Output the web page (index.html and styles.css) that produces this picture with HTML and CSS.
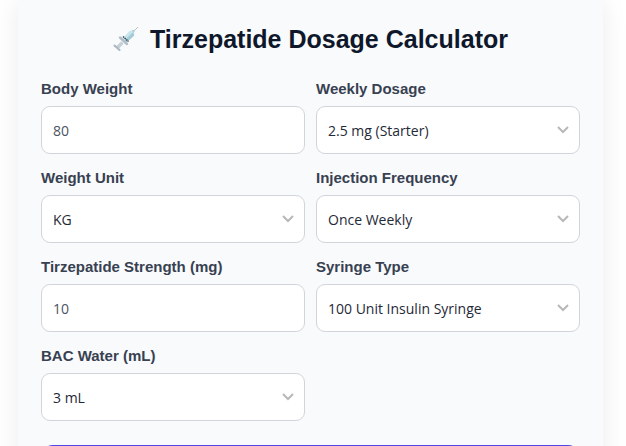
FILE: index.html
```html
<!DOCTYPE html>
<html lang="en">
<head>
  <meta charset="UTF-8">
  <meta name="viewport" content="width=device-width, initial-scale=1">
  <title>Tirzepatide Dosage Calculator</title>
  <link rel="stylesheet" href="styles.css">
</head>
<body>
  <form class="calculator">
    <h1>
      <svg class="syringe" viewBox="0 0 26 26" aria-hidden="true">
        <path d="M19 7L25 1" stroke="#b9c2ca" stroke-width="1"/>
        <path d="M17 6l3-2.500 2 2-2.500 3z" fill="#b5d5df"/>
        <path d="M9 13l7-7.500c1-1 2-.8 3 0l1.500 1.500c1 1 1 2 0 3L13 17z" fill="#c9e6ee"/>
        <path d="M11 15l8.500-8.500 1 1c1 1 1 1.700 0 2.700L13 17z" fill="#a5cbd7"/>
        <path d="M10 10.500l5.500 5" stroke="#35444f" stroke-width="1.500" stroke-dasharray="1.500 .7"/>
        <path d="M7 11.500l7 6.500" stroke="#b3bec9" stroke-width="2.500" stroke-linecap="round"/>
        <path d="M9.500 16.500L4 22" stroke="#c7d0d8" stroke-width="3.500"/>
        <path d="M1.500 19.500l5 4.500" stroke="#aab7c4" stroke-width="2" stroke-linecap="round"/>
      </svg>
      Tirzepatide Dosage Calculator
    </h1>

    <div class="fields">
      <div class="field">
        <label for="weight">Body Weight</label>
        <input type="text" inputmode="decimal" id="weight" value="80">
      </div>
      <div class="field">
        <label for="dosage">Weekly Dosage</label>
        <select id="dosage">
          <option>2.5 mg (Starter)</option>
        </select>
      </div>
      <div class="field">
        <label for="unit">Weight Unit</label>
        <select id="unit">
          <option>KG</option>
        </select>
      </div>
      <div class="field">
        <label for="frequency">Injection Frequency</label>
        <select id="frequency">
          <option>Once Weekly</option>
        </select>
      </div>
      <div class="field">
        <label for="strength">Tirzepatide Strength (mg)</label>
        <input type="text" inputmode="decimal" id="strength" value="10">
      </div>
      <div class="field">
        <label for="syringe">Syringe Type</label>
        <select id="syringe">
          <option>100 Unit Insulin Syringe</option>
        </select>
      </div>
      <div class="field">
        <label for="water">BAC Water (mL)</label>
        <select id="water">
          <option>3 mL</option>
        </select>
      </div>
    </div>

    <button type="button" aria-label="Calculate"></button>
  </form>
</body>
</html>
```
FILE: styles.css
```css
* {
  box-sizing: border-box;
}
body {
  margin: 0;
  height: 100vh;
  overflow: hidden;
  background: #fff;
  font-family: "Liberation Sans", Arial, sans-serif;
}
.calculator {
  margin: 0 23px 0 18px;
  padding: 24px 23px;
  background: #f9fafc;
  box-shadow: 0 0 25px rgba(0, 0, 0, 0.08);
}
h1 {
  display: flex;
  align-items: center;
  justify-content: center;
  gap: 11px;
  margin: 0 0 24px;
  font-size: 25px;
  line-height: 30px;
  color: #0f172a;
}
.syringe {
  width: 26px;
  height: 26px;
  fill: none;
}
.fields {
  display: grid;
  grid-template-columns: 1fr 1fr;
  gap: 13px 11px;
}
label {
  display: block;
  margin-bottom: 6px;
  font-size: 15px;
  font-weight: bold;
  line-height: 22px;
  color: #374151;
}
input, select {
  display: block;
  width: 100%;
  height: 48px;
  padding: 0 11px;
  border: 1px solid #d1d5db;
  border-radius: 9px;
  background: #fff;
  font-family: "Open Sans", "Noto Sans", sans-serif;
  font-size: 14px;
  color: #1f2937;
}
input {
  color: #4b5563;
}
select {
  appearance: none;
  background: #fff url("data:image/svg+xml,%3Csvg xmlns='http://www.w3.org/2000/svg' viewBox='0 0 12 8' fill='none' stroke='%23b8b8b8' stroke-width='2'%3E%3Cpath d='M1 1l5 5 5-5'/%3E%3C/svg%3E") no-repeat right 10px center / 12px 8px;
}
button {
  width: 100%;
  height: 48px;
  margin-top: 24px;
  border: none;
  border-radius: 12px;
  background: #4f46e5;
}
```
